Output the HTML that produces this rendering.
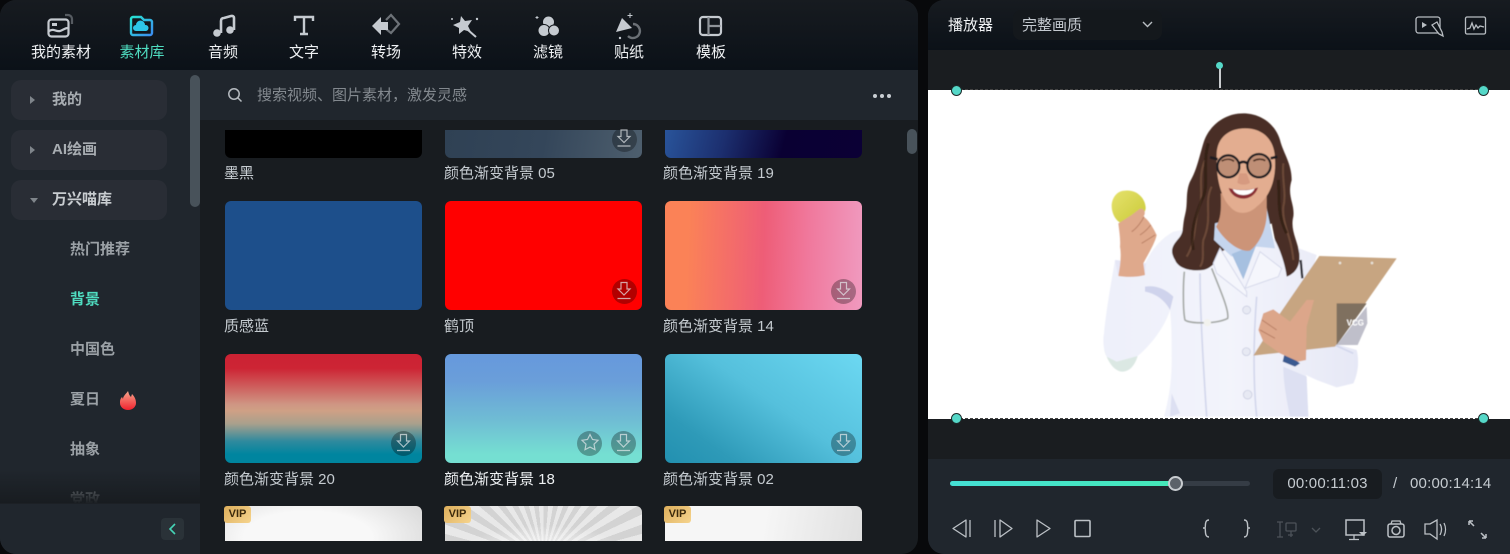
<!DOCTYPE html>
<html><head><meta charset="utf-8">
<style>
*{box-sizing:border-box;margin:0;padding:0}
html,body{width:1510px;height:554px;overflow:hidden;background:#08090b;font-family:"Liberation Sans","Noto Sans CJK SC",sans-serif}
.a{position:absolute}
#left{left:0;top:0;width:918px;height:554px;background:#181c20;border-radius:16px;overflow:hidden}
#top{left:0;top:0;width:918px;height:70px;background:linear-gradient(#171b20,#0b1118)}
.tab{position:absolute;top:44px;width:90px;text-align:center;font-size:15px;line-height:18px;color:#f0f2f4}
.ic{position:absolute;left:0;top:0}
#side{left:0;top:70px;width:200px;height:484px;background:#20262d}
.grp{position:absolute;left:11px;width:156px;height:40px;background:#292d35;border-radius:10px;color:#a8adb2;font-size:15px;font-weight:bold;line-height:40px;padding-left:41px}
.tri{position:absolute;left:19px;top:16px;width:0;height:0;border-left:5px solid #7f858b;border-top:4px solid transparent;border-bottom:4px solid transparent}
.sub{position:absolute;left:70px;font-size:15px;font-weight:bold;line-height:20px;color:#9ba1a6}
#srch{left:200px;top:70px;width:718px;height:50px;background:#20262d;color:#83898f;font-size:15px;line-height:52px}
.card{position:absolute;width:197px;height:109px;border-radius:6px;overflow:hidden}
.lab{position:absolute;font-size:15px;line-height:18px;color:#c5cbd0;white-space:nowrap}
.dl{position:absolute;width:25px;height:25px;border-radius:50%;background:rgba(0,0,0,.3)}
.vip{position:absolute;width:27px;height:17px;background:linear-gradient(135deg,#dcae5b,#f6d48e);border-radius:3px;color:#3b2a0c;font-size:11px;font-weight:bold;line-height:17px;text-align:center}
#right{left:928px;top:0;width:582px;height:554px;background:#1a1d20;border-radius:16px 0 0 16px;overflow:hidden}
.h{position:absolute;width:11px;height:11px;border-radius:50%;background:#55d8c8;border:1px solid #1c2b2b}
</style></head><body>
<div class="a" id="left">
<div class="a" id="top"></div>
<svg class="ic" width="918" height="70" fill="none" stroke="#c5cad0" stroke-width="2.200">
<defs><linearGradient id="g1" x1="0" y1="0" x2="1" y2="1"><stop offset="0" stop-color="#27e2d2"/><stop offset="1" stop-color="#3b8df0"/></linearGradient></defs>
<rect x="48.500" y="19.500" width="20" height="17" rx="3"/><path d="M65 15h3a4 4 0 0 1 4 4v5" stroke="#565b61"/><path d="M49 31c5-3 7 1 11 0 3-1 5-3 8-3"/><rect x="52" y="23" width="5" height="3" fill="#c5cad0" stroke="none"/>
<path d="M131 19a2 2 0 0 1 2-2h8l3 3h6a2 2 0 0 1 2 2v11a2 2 0 0 1-2 2h-17a2 2 0 0 1-2-2z" stroke="url(#g1)" stroke-width="2.400"/><path d="M136 31a3 3 0 0 1 0-6 4.500 4.500 0 0 1 9 0 3 3 0 0 1 1 6z" fill="#2dc6e8" stroke="none"/>
<path d="M221 33V21c0-2 1-3 3-3l7-2c2-.3 3 .5 3 2v12" stroke-width="2.600"/><circle cx="217" cy="33" r="3.800" fill="#c5cad0" stroke="none"/><circle cx="230" cy="30" r="3.800" fill="#c5cad0" stroke="none"/>
<path d="M295 21v-4h18v4M304 17v17M300 34h8" stroke-width="2.400"/>
<path d="M386 20l5-5 8 9-8 9-5-4" stroke="#6d7278"/><path d="M372 26l9-9v5h7v8h-7v5z" fill="#c5cad0" stroke="none"/>
<path d="M461 16l4 5 7-1-4 6 3 6-7-2-5 4v-6l-6-3 7-3z" fill="#c5cad0" stroke="none"/><path d="M468 30l8 7" stroke-width="2"/><circle cx="452" cy="19" r="1" fill="#c5cad0" stroke="none"/><circle cx="477" cy="19" r="1.200" fill="#c5cad0" stroke="none"/>
<g stroke="#12161b" stroke-width="1" fill="#c5cad0"><circle cx="548.500" cy="22" r="6"/><circle cx="544" cy="30.500" r="6"/><circle cx="554" cy="30.500" r="5.500"/></g><path d="M537 16v3M535.500 17.500h3" stroke-width="1"/>
<path d="M622 18l10 10-16 4z" fill="#c5cad0" stroke="none"/><path d="M633 24a7 7 0 1 1-5 12" stroke="#6b7076" stroke-width="2.400"/><path d="M630 13v5M627.500 15.500h5" stroke-width="1"/><circle cx="620" cy="38" r="1.200" fill="#c5cad0" stroke="none"/>
<rect x="700" y="17" width="21" height="18" rx="3"/><path d="M708.500 17v18M708.500 26h12" stroke="#8e9399"/>
</svg>
<div class="tab" style="left:16px">我的素材</div>
<div class="tab" style="left:97px;color:#4fdcc0">素材库</div>
<div class="tab" style="left:178px">音频</div>
<div class="tab" style="left:259px">文字</div>
<div class="tab" style="left:341px">转场</div>
<div class="tab" style="left:422px">特效</div>
<div class="tab" style="left:503px">滤镜</div>
<div class="tab" style="left:584px">贴纸</div>
<div class="tab" style="left:666px">模板</div>

<div class="a" id="side"></div>
<div class="grp" style="top:80px"><span class="tri"></span>我的</div>
<div class="grp" style="top:130px"><span class="tri"></span>AI绘画</div>
<div class="grp" style="top:180px;color:#c8ccd0"><span class="tri" style="top:18px;border-top:5px solid #7f858b;border-left:4px solid transparent;border-right:4px solid transparent;border-bottom:0"></span>万兴喵库</div>
<div class="sub" style="top:240px">热门推荐</div>
<div class="sub" style="top:290px;color:#4fdcc0">背景</div>
<div class="sub" style="top:340px">中国色</div>
<div class="sub" style="top:390px">夏日</div>
<svg class="a" style="left:119px;top:391px" width="19" height="19"><defs><linearGradient id="f" x1="0" y1="0" x2="0" y2="1"><stop offset="0" stop-color="#f7a68c"/><stop offset="1" stop-color="#f0212e"/></linearGradient></defs><path d="M9 0c1 3 1 4 3 6l1-3c3 3 4 6 4 9a8 7 0 0 1-16 0c0-2 0-4 2-6l1 2c0-3 3-5 5-8z" fill="url(#f)"/></svg>
<div class="sub" style="top:440px">抽象</div>
<div class="sub" style="top:490px">党政</div>
<div class="a" style="left:0;top:470px;width:200px;height:34px;background:linear-gradient(rgba(24,28,32,0),#181c20)"></div>
<div class="a" style="left:0;top:503px;width:200px;height:51px;background:#20262d;border-top:1px solid #1c2025"></div>
<div class="a" style="left:161px;top:518px;width:23px;height:22px;background:#2a3238;border-radius:4px"></div>
<svg class="a" style="left:161px;top:518px" width="23" height="22" fill="none" stroke="#45d4b6" stroke-width="1.600"><path d="M14 6l-5 5 5 5"/></svg>
<div class="a" style="left:190px;top:75px;width:10px;height:132px;background:#48525a;border-radius:5px"></div>

<div class="a" id="srch"><span class="a" style="left:57px;top:0;white-space:nowrap">搜索视频、图片素材，激发灵感</span></div>
<svg class="a" style="left:226px;top:86px" width="18" height="18" fill="none" stroke="#b5babf" stroke-width="1.500"><circle cx="8" cy="8" r="5.200"/><path d="M12 12l3.500 3.500"/></svg>
<svg class="a" style="left:870px;top:90px" width="24" height="12" fill="#c9ced3"><circle cx="5" cy="6" r="2"/><circle cx="12" cy="6" r="2"/><circle cx="19" cy="6" r="2"/></svg>

<div class="a" style="left:200px;top:120px;width:718px;height:434px;overflow:hidden" id="grid">
<div class="card" style="left:25px;top:10px;height:28px;border-radius:0 0 6px 6px;background:#000"></div>
<div class="card" style="left:245px;top:10px;height:28px;border-radius:0 0 6px 6px;background:linear-gradient(100deg,#2f4154,#34465a 50%,#4e5f6e)"></div>
<div class="card" style="left:465px;top:10px;height:28px;border-radius:0 0 6px 6px;background:linear-gradient(105deg,#29549a 0%,#1c2f6f 30%,#0a0033 60%,#0b0035)"></div>
<div class="dl" style="left:412px;top:7px"></div>
<div class="a" style="left:0;top:0;width:718px;height:10px;background:#181c20"></div>
<div class="lab" style="left:24px;top:45px">墨黑</div><div class="lab" style="left:244px;top:45px">颜色渐变背景 05</div><div class="lab" style="left:463px;top:45px">颜色渐变背景 19</div>

<div class="card" style="left:25px;top:81px;height:109px;background:#1d4f8b"></div>
<div class="card" style="left:245px;top:81px;background:#f00"></div>
<div class="card" style="left:465px;top:81px;background:linear-gradient(92deg,#fb8257 0%,#fb8257 12%,#ee5d77 50%,#f0789c 72%,#f09abf 100%)"></div>
<div class="dl" style="left:412px;top:159px"></div><div class="dl" style="left:631px;top:159px"></div>
<div class="lab" style="left:24px;top:198px">质感蓝</div><div class="lab" style="left:244px;top:198px">鹤顶</div><div class="lab" style="left:463px;top:198px">颜色渐变背景 14</div>

<div class="card" style="left:25px;top:234px;background:linear-gradient(#cb2233 0%,#cd2434 13%,#cf9583 46%,#cfa085 52%,#a9a08c 64%,#2f8a9e 80%,#00859f 92%)"></div>
<div class="card" style="left:245px;top:234px;background:linear-gradient(#6699dc 0%,#6a9eda 25%,#6fbcd4 60%,#75dfd2 92%)"></div>
<div class="card" style="left:465px;top:234px;background:linear-gradient(215deg,#6cd8f2 0%,#55c0dc 45%,#2e9ab8 80%,#2290b0 100%)"></div>
<div class="dl" style="left:191px;top:311px"></div><div class="dl" style="left:377px;top:311px"></div><div class="dl" style="left:411px;top:311px"></div><div class="dl" style="left:631px;top:311px"></div>
<div class="lab" style="left:24px;top:351px">颜色渐变背景 20</div><div class="lab" style="left:244px;top:351px;color:#eef1f3">颜色渐变背景 18</div><div class="lab" style="left:463px;top:351px">颜色渐变背景 02</div>

<div class="card" style="left:25px;top:386px;height:35px;border-radius:6px 6px 0 0;background:radial-gradient(ellipse 65% 150% at 42% 90%,#f8f8f8 50%,#dcdcdc 100%)"></div>
<div class="card" style="left:245px;top:386px;height:35px;border-radius:6px 6px 0 0;background:radial-gradient(ellipse 40% 70% at 50% 125%,rgba(255,255,255,.8),rgba(255,255,255,0)),repeating-conic-gradient(from 0deg at 50% 155%,#d3d3d3 0 5deg,#e8e8e8 5deg 10deg)"></div>
<div class="card" style="left:465px;top:386px;height:35px;border-radius:6px 6px 0 0;background:linear-gradient(100deg,#f6f6f6 50%,#e0e0e0 100%)"></div>
<div class="vip" style="left:24px;top:386px">VIP</div><div class="vip" style="left:244px;top:386px">VIP</div><div class="vip" style="left:464px;top:386px">VIP</div>
<svg class="a" style="left:0;top:0" width="718" height="421" fill="none" stroke="#e6e9ec" stroke-opacity=".7" stroke-width="1.200">
<g transform="translate(424 19)"><path d="M-3-9h6v6.500h3L0 3.500l-6-6h3zM-6.500 7h13"/></g>
<g transform="translate(424 171.500)"><path d="M-3-9h6v6.500h3L0 3.500l-6-6h3zM-6.500 7h13"/></g>
<g transform="translate(643.500 171.500)"><path d="M-3-9h6v6.500h3L0 3.500l-6-6h3zM-6.500 7h13"/></g>
<g transform="translate(203.500 323.500)"><path d="M-3-9h6v6.500h3L0 3.500l-6-6h3zM-6.500 7h13"/></g>
<g transform="translate(423.500 323.500)"><path d="M-3-9h6v6.500h3L0 3.500l-6-6h3zM-6.500 7h13"/></g>
<g transform="translate(643.500 323.500)"><path d="M-3-9h6v6.500h3L0 3.500l-6-6h3zM-6.500 7h13"/></g>
<path d="M390 314.500l2.500 5 5.500.8-4 3.900 1 5.500-5-2.600-5 2.600 1-5.500-4-3.900 5.500-.8z"/>
</svg>
</div>
<div class="a" style="left:907px;top:129px;width:10px;height:25px;background:#48525a;border-radius:5px"></div>
</div>

<div class="a" id="right">
<div class="a" style="left:0;top:0;width:582px;height:50px;background:linear-gradient(#171b20,#0b1118)"></div>
<div class="a" style="left:20px;top:16px;font-size:15px;line-height:20px;color:#f0f2f4">播放器</div>
<div class="a" style="left:85px;top:10px;width:149px;height:30px;background:#14181c;border-radius:8px;padding-left:9px;font-size:15px;line-height:32px;color:#c5cad0">完整画质</div>
<svg class="a" style="left:212px;top:20px" width="16" height="10" fill="none" stroke="#b8bdc2" stroke-width="1.400"><path d="M3 2l4.500 4.500L12 2"/></svg>
<svg class="a" style="left:485px;top:14px" width="80" height="24" fill="none" stroke="#b8bdc2" stroke-width="1.300"><rect x="3" y="3" width="24" height="16" rx="2.500"/><path d="M9 8l5 3-5 3z" fill="#b8bdc2" stroke="none"/><path d="M19 11l5-3 5 10 1 4-4-2z" fill="#10151a"/><rect x="52.500" y="3" width="20" height="17" rx="1.500"/><path d="M54 15l3-1 2-5 2 6 2-4 2 3 2-2 4 1"/></svg>

<div class="a" style="left:0;top:90px;width:582px;height:329px;background:#fff"></div>
<div class="a" style="left:27px;top:89px;width:528px;border-top:1px dashed #444"></div>
<div class="a" style="left:27px;top:418px;width:528px;border-top:1px dashed #444"></div>
<div class="a" style="left:290.500px;top:68px;width:2px;height:20px;background:#c9ccce"></div>
<div class="h" style="left:288px;top:62px;width:7px;height:7px;border:0"></div>
<div class="h" style="left:23px;top:85px"></div><div class="h" style="left:550px;top:85px"></div>
<div class="h" style="left:23px;top:413px"></div><div class="h" style="left:550px;top:413px"></div>

<svg class="a" style="left:0;top:90px" width="582" height="329">
<defs><filter id="bl" x="-5%" y="-5%" width="110%" height="110%"><feGaussianBlur stdDeviation="1.500"/></filter>
<linearGradient id="ap" x1="0" y1="0" x2="1" y2="1"><stop offset="0" stop-color="#e6e26c"/><stop offset="1" stop-color="#c9c938"/></linearGradient>
<linearGradient id="cl" x1="0" y1="0" x2="1" y2="0"><stop offset="0" stop-color="#eef0fa"/><stop offset=".5" stop-color="#f3f4fb"/><stop offset="1" stop-color="#e6e8f6"/></linearGradient></defs>
<g transform="translate(162 10) scale(.33333)" filter="url(#bl)">
<!-- coat -->
<path d="M75 480L165 490C180 460 205 420 250 395L380 370L560 420L680 465L640 620L650 695L680 715L800 750C808 780 805 820 790 850L740 862L680 840L648 825L655 950H222C235 900 245 850 245 780C245 720 245 680 240 630C225 680 180 740 140 770L80 785L50 770C40 750 38 720 42 700C50 620 65 540 75 480Z" fill="url(#cl)"/>
<path d="M42 745C50 780 70 812 95 815C120 815 135 795 143 768L80 785L50 770Z" fill="#dbe8e3"/>
<path d="M165 560C195 555 225 565 250 590L240 630C225 600 195 580 165 575Z" fill="#cfd3ec"/>
<path d="M580 800L650 830L655 950H600C590 900 580 850 580 800ZM245 880L270 940L240 950Z" fill="#dde0f2"/>
<path d="M330 520C330 640 340 800 350 950M500 590C490 720 490 850 500 950M690 715L790 760" stroke="#d3d7ec" stroke-width="5" fill="none"/>
<!-- hair back -->
<path d="M460 40C400 40 355 80 340 130C325 180 320 210 300 245C285 280 295 310 285 345C275 385 285 395 262 420C245 440 240 455 255 480C265 505 300 515 340 510C365 505 385 480 395 455L545 370L555 420C570 450 585 490 590 530C615 520 632 500 628 460C622 420 600 390 610 350C615 310 590 290 605 240C605 190 580 160 570 120C555 70 510 40 460 40Z" fill="#4a2f25"/>
<path d="M345 180C320 240 345 280 325 330C310 380 320 420 290 470M365 260C340 310 370 350 340 420C335 450 345 480 330 500M580 190C575 240 590 280 580 320C575 370 605 410 610 480" fill="none" stroke="#7a5541" stroke-width="6" opacity=".7"/>
<path d="M355 130C335 200 360 260 335 300C315 350 300 400 310 450M565 240C570 300 560 340 590 400" fill="none" stroke="#2e1b14" stroke-width="9" opacity=".7"/>
<!-- shirt -->
<path d="M375 370L372 420L425 470L470 450L500 440L555 445C550 420 540 370 530 325Z" fill="#c5d5ee"/>
<path d="M425 462L500 432L460 538Z" fill="#a6c0e0"/>
<path d="M390 445L470 575V590L380 520L370 490Z" fill="#f5f6fc" stroke="#d5d8ea" stroke-width="3"/>
<path d="M510 455L575 505L565 530L465 565Z" fill="#f5f6fc" stroke="#d5d8ea" stroke-width="3"/>
<!-- neck -->
<path d="M392 280C395 340 390 360 378 380C405 425 450 458 480 452C510 430 535 380 530 320L530 280Z" fill="#cc9478"/>
<!-- face -->
<path d="M380 170C378 110 420 85 465 85C520 85 555 120 555 180C558 240 540 290 500 320C475 345 440 345 420 320C395 295 378 240 380 170Z" fill="#e3ad90"/>
<!-- glasses -->
<g fill="#7c5a48" fill-opacity=".35" stroke="#1b1e22" stroke-width="7"><circle cx="415" cy="199" r="33"/><circle cx="507" cy="197" r="35"/></g>
<path d="M447 190C457 184 463 184 472 190M383 178L360 172M542 175L562 170" stroke="#1b1e22" stroke-width="8" fill="none"/>
<path d="M395 183C408 176 422 176 432 184M490 183C502 176 516 176 526 182" stroke="#4b2f22" stroke-width="5" fill="none"/>
<path d="M448 220L442 248C450 256 472 256 480 248L470 220Z" fill="#d69a80"/>
<path d="M416 264C440 272 480 272 504 262C498 284 478 296 460 296C440 296 422 284 416 264Z" fill="#8b2f36"/>
<path d="M428 267C445 272 480 272 494 265C490 276 478 285 460 285C445 285 432 278 428 267Z" fill="#fff"/>
<!-- stethoscope -->
<path d="M283 515C278 570 280 640 285 660C300 672 380 672 413 655C418 630 390 570 365 505" fill="none" stroke="#a5a9a6" stroke-width="5"/>
<path d="M632 480L637 535" stroke="#2a2a30" stroke-width="7"/>
<circle cx="352" cy="668" r="11" fill="#f2f2ee"/>
<g fill="#e7e9f3" stroke="#c3c7dc" stroke-width="2"><circle cx="470" cy="630" r="12"/><circle cx="469" cy="755" r="12"/><circle cx="473" cy="884" r="13"/></g>
<!-- apple arm -->
<path d="M75 480L83 525L165 525L168 490Z" fill="#e6e7f6"/>
<path d="M106 272C140 268 167 295 167 325C165 345 135 372 106 372C82 372 65 345 65 317C66 292 82 272 106 272Z" fill="url(#ap)"/>
<path d="M85 370L125 345L150 326C165 325 168 340 160 350C178 360 195 395 200 405C195 430 170 470 160 490L165 525C140 532 110 532 85 528C90 500 95 470 90 440C92 420 88 395 85 370Z" fill="#dfa98c"/>
<path d="M125 395C140 385 155 365 162 350M150 405C165 395 175 385 182 375M155 430L195 405" stroke="#b97f64" stroke-width="3" fill="none"/>
<!-- clipboard -->
<path d="M688 468L920 475L735 740L490 767L570 640Z" fill="#c7a581"/>
<circle cx="750" cy="489" r="4" fill="#e8e2d8"/><circle cx="846" cy="489" r="4" fill="#e8e2d8"/>
<path d="M740 610H830L740 735Z" fill="#7f6f5e"/>
<path d="M830 620L832 670L803 735H740Z" fill="#a9aab8" opacity=".75"/>
<text x="770" y="677" font-family="Liberation Sans" font-size="24" font-weight="bold" fill="#fff">VCG</text>
<!-- hand -->
<path d="M585 755L630 790L615 800L578 785Z" fill="#3b5a90"/>
<path d="M505 690L520 640L550 628L600 665L650 600L672 600L650 680L648 780L625 785L570 760L520 725Z" fill="#dca68a"/>
<path d="M516 660L560 690M510 690L555 715" stroke="#b87e64" stroke-width="3" fill="none"/>
</g></svg>

<div class="a" style="left:0;top:459px;width:582px;height:95px;background:#20262d"></div>
<div class="a" style="left:22px;top:481px;width:300px;height:5px;background:#353c45;border-radius:3px"></div>
<div class="a" style="left:22px;top:481px;width:225px;height:5px;background:linear-gradient(90deg,#45dfd4,#45e8b8);border-radius:3px"></div>
<div class="a" style="left:240px;top:476px;width:15px;height:15px;background:#5c6269;border:2px solid #c8ccd0;border-radius:50%"></div>
<div class="a" style="left:345px;top:469px;width:109px;height:30px;background:#181c20;border-radius:6px;text-align:center;font-size:15px;letter-spacing:.2px;line-height:30px;color:#c5cbd0;white-space:nowrap">00:00:11:03</div>
<div class="a" style="left:465px;top:475px;font-size:15px;line-height:18px;color:#c5cbd0;white-space:nowrap">/</div>
<div class="a" style="left:482px;top:475px;font-size:15px;letter-spacing:.2px;line-height:18px;color:#c5cbd0;white-space:nowrap">00:00:14:14</div>
<svg class="a" style="left:0;top:510px" width="582" height="44" fill="none" stroke="#bcc1c6" stroke-width="1.300">
<path d="M42 10v17M38 10v17L25 18.500z" stroke-linejoin="round"/>
<path d="M67 10v17M72 10v17l12-8.500z" stroke-linejoin="round"/>
<path d="M109 10v17l13-8.500z" stroke-linejoin="round"/>
<rect x="147" y="10.500" width="15" height="16" rx="1" stroke-width="1.600"/>
<path d="M281 10c-5 0-3 7-4 8h-2 2c1 1-1 9 4 9M316 10c5 0 3 7 4 8h2-2c-1 1 1 9-4 9" stroke-width="1.400"/>
<g stroke="#4c5259"><path d="M352 12v15M349 12h6M349 27h6"/><rect x="358" y="13" width="10" height="8" rx="1"/><path d="M363 21v6M360 25h5"/><path d="M384 18l4 4 4-4"/></g>
<rect x="418" y="10" width="18" height="15" stroke-width="1.500"/><path d="M426 25v4M421 29.500h10"/><path d="M431 22h8l-4 4z" fill="#bcc1c6" stroke="none"/>
<rect x="460" y="14" width="16" height="13" rx="2" stroke-width="1.500"/><circle cx="468" cy="20.500" r="4" stroke-width="1.500"/><path d="M463 14l1-3h8l1 3"/>
<path d="M497 14v10h5l7 5V10l-7 4zM512 14c2 3 2 7 0 11M516 13c2 4 2 9 0 13"/>
<path d="M541 11l5 5M541 11h4M541 11v4M558 28l-5-5M558 28h-4M558 28v-4" stroke-width="1.500"/>
</svg>
</div>
</body></html>
